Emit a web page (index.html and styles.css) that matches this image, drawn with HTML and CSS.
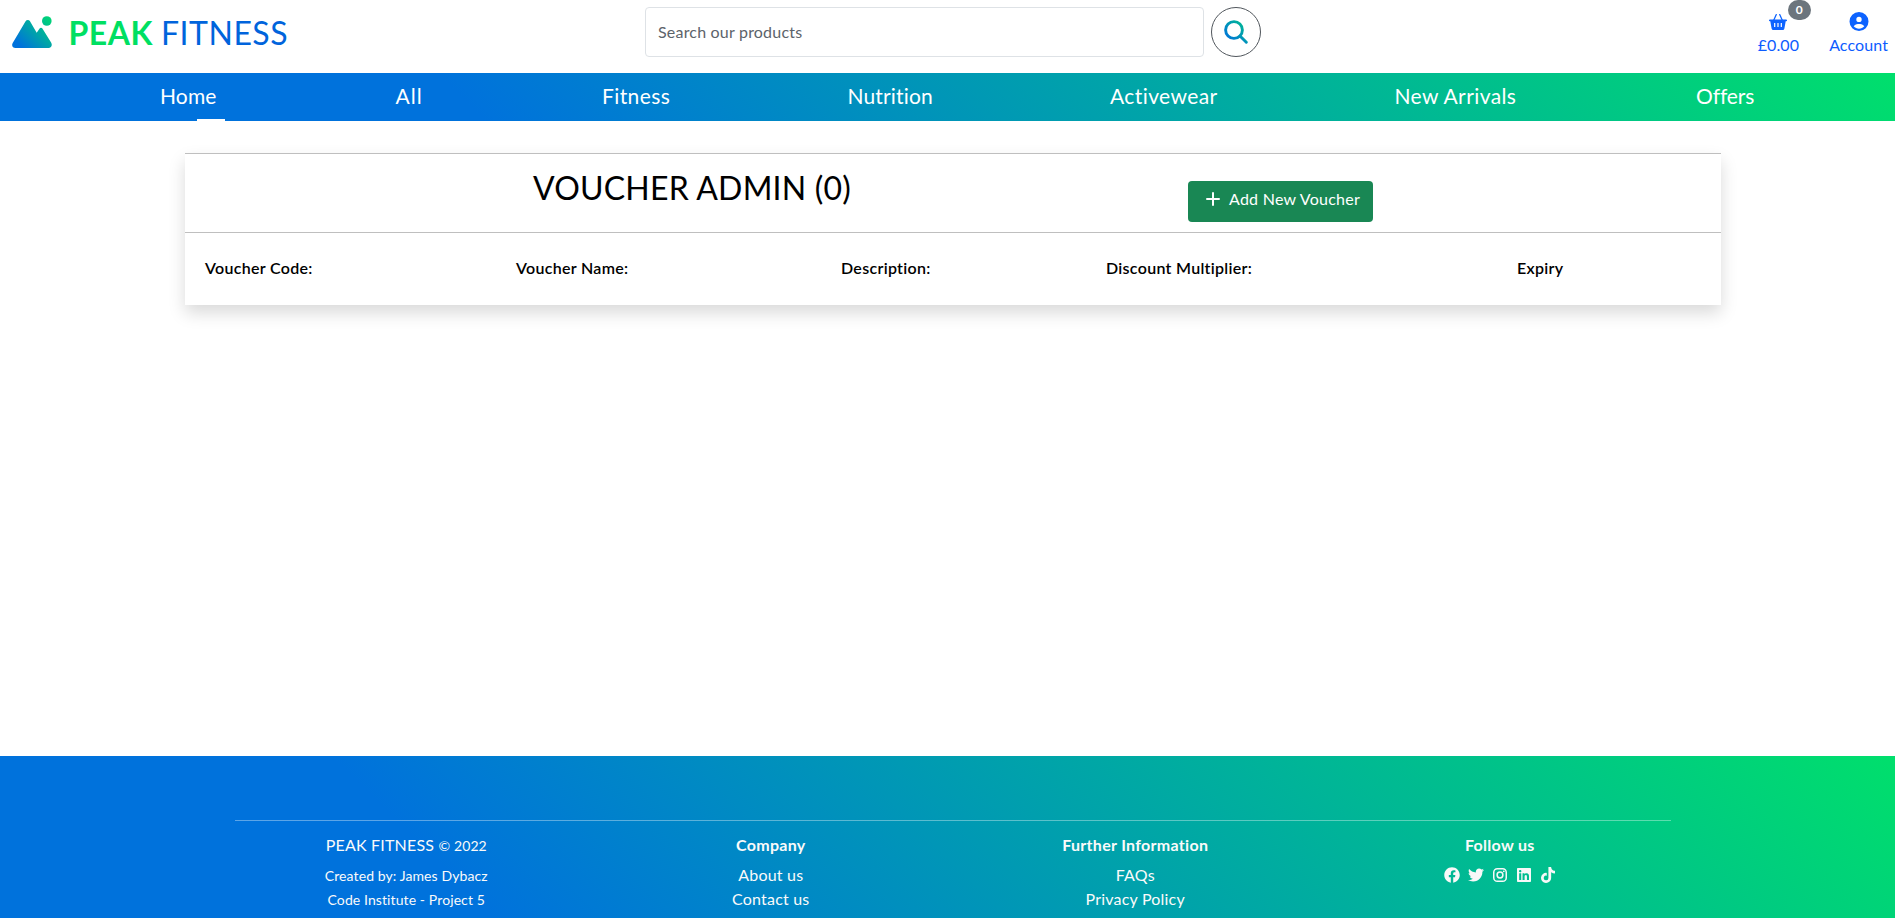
FILE: index.html
```html
<!DOCTYPE html>
<html lang="en">
<head>
<meta charset="utf-8">
<title>Peak Fitness</title>
<link rel="stylesheet" href="styles.css">
</head>
<body>
<header class="top">
  <a class="brand">
    <svg class="logo" viewBox="0 0 40 32"><defs><linearGradient id="g" gradientUnits="userSpaceOnUse" x1="6" y1="36" x2="42" y2="0"><stop offset=".12" stop-color="#0072dc"/><stop offset="1" stop-color="#00df6c"/></linearGradient></defs><path fill="url(#g)" d="M13.600 5.300a2.600 2.600 0 0 1 4.400 0l6.700 11.400 2.900-4.300a1.700 1.700 0 0 1 2.800 0L39.100 26.500c1.600 2.600.2 5.500-2.600 5.500H3.500C.7 32-.7 29.400.7 27z"/><circle cx="34.800" cy="5" r="4.800" fill="url(#g)"/></svg>
    <span class="peak">PEAK</span><span class="fit">FITNESS</span>
  </a>
  <form class="search">
    <input class="field" type="text" placeholder="Search our products">
    <button class="go" type="button"><svg viewBox="0 0 24 24"><defs><linearGradient id="s" x1="0" y1="1" x2="1" y2="0"><stop offset="0" stop-color="#0072dc"/><stop offset="1" stop-color="#00b894"/></linearGradient></defs><g fill="none" stroke="url(#s)" stroke-width="2.900" stroke-linecap="round"><circle cx="10" cy="10" r="8.400"/><path d="M16 16l6.300 6.300"/></g></svg></button>
  </form>
  <div class="links">
    <a class="bag"><svg viewBox="0 0 18 17"><path d="M4.600 7.500 7.300 1.600M13.400 7.500l-2.700-5.900" fill="none" stroke="#0d63ff" stroke-width="1.300" stroke-linecap="round"/><path fill-rule="evenodd" d="M.8 6.500h16.400a.8.8 0 0 1 0 1.700h-.5l-1.300 7.300q-.3 1.500-1.700 1.500H4.300q-1.400 0-1.700-1.500L1.300 8.200H.8a.8.800 0 0 1 0-1.700zM5.100 10v4h1.200v-4zM8.400 10v4h1.200v-4zM11.700 10v4h1.200v-4z"/></svg><span>£0.00</span><b class="count">0</b></a>
    <a class="account"><svg viewBox="0 0 512 512"><path fill-rule="evenodd" d="M399 384.200C376.900 345.800 335.400 320 288 320H224c-47.400 0-88.900 25.800-111 64.200c35.200 39.200 86.200 63.800 143 63.800s107.800-24.700 143-63.800zM0 256a256 256 0 1 1 512 0A256 256 0 1 1 0 256zm256 16a72 72 0 1 0 0-144 72 72 0 1 0 0 144z"/></svg><span>Account</span></a>
  </div>
</header>
<nav class="nav">
  <a class="current">Home</a><a class="wider">All</a><a class="wide">Fitness</a><a>Nutrition</a><a class="wide">Activewear</a><a class="wide">New Arrivals</a><a class="tight">Offers</a>
</nav>
<main class="main">
  <section class="card">
    <div class="head">
      <h1 class="title">VOUCHER ADMIN (0)</h1>
      <a class="add"><svg viewBox="0 0 14 14"><path d="M7 1v12M1 7h12" stroke="#fff" stroke-width="2" stroke-linecap="round"/></svg><span>Add New Voucher</span></a>
    </div>
    <div class="cols">
      <span>Voucher Code:</span><span>Voucher Name:</span><span>Description:</span><span>Discount Multiplier:</span><span>Expiry</span>
    </div>
  </section>
</main>
<footer class="footer">
  <hr class="rule">
  <div class="grid">
    <div class="col"><p class="first">PEAK FITNESS <small>© 2022</small></p><p class="sm">Created by: James Dybacz</p><p class="sm">Code Institute - Project 5</p></div>
    <div class="col"><h2>Company</h2><p>About us</p><p>Contact us</p></div>
    <div class="col"><h2>Further Information</h2><p>FAQs</p><p>Privacy Policy</p></div>
    <div class="col"><h2>Follow us</h2>
      <div class="social">
        <svg viewBox="0 0 512 512"><path d="M504 256C504 119 393 8 256 8S8 119 8 256c0 123.780 90.690 226.380 209.250 245V327.690h-63V256h63v-54.640c0-62.150 37-96.480 93.670-96.480 27.140 0 55.520 4.840 55.520 4.840v61h-31.280c-30.800 0-40.410 19.120-40.410 38.730V256h68.780l-11 71.690h-57.780V501C413.310 482.380 504 379.780 504 256z"/></svg>
        <svg viewBox="0 0 512 512"><path d="M459.370 151.716c.325 4.548.325 9.097.325 13.645 0 138.720-105.583 298.558-298.558 298.558-59.452 0-114.680-17.219-161.137-47.106 8.447.974 16.568 1.299 25.340 1.299 49.055 0 94.213-16.568 130.274-44.832-46.132-.975-84.792-31.188-98.112-72.772 6.498.974 12.995 1.624 19.818 1.624 9.421 0 18.843-1.300 27.614-3.573-48.081-9.747-84.143-51.980-84.143-102.985v-1.299c13.969 7.797 30.214 12.670 47.431 13.319-28.264-18.843-46.781-51.005-46.781-87.391 0-19.492 5.197-37.360 14.294-52.954 51.655 63.675 129.300 105.258 216.365 109.807-1.624-7.797-2.599-15.918-2.599-24.040 0-57.828 46.782-104.934 104.934-104.934 30.213 0 57.502 12.670 76.670 33.137 23.715-4.548 46.456-13.320 66.599-25.340-7.798 24.366-24.366 44.833-46.132 57.827 21.117-2.273 41.584-8.122 60.426-16.243-14.292 20.791-32.161 39.308-52.628 54.253z"/></svg>
        <svg viewBox="0 0 16 16"><g fill="none" stroke="#f8f8f8" stroke-width="1.500"><rect x="1.750" y="1.750" width="12.500" height="12.500" rx="3.600"/><circle cx="8" cy="8" r="2.900"/></g><circle cx="11.800" cy="4.300" r=".9"/></svg>
        <svg viewBox="0 0 448 512"><path d="M416 32H31.900C14.300 32 0 46.500 0 64.300v383.400C0 465.500 14.300 480 31.900 480H416c17.600 0 32-14.500 32-32.300V64.300c0-17.800-14.400-32.300-32-32.300zM135.400 416H69V202.200h66.500V416zm-33.200-243c-21.300 0-38.500-17.300-38.500-38.500S80.900 96 102.200 96c21.200 0 38.500 17.300 38.500 38.500 0 21.300-17.200 38.500-38.500 38.500zm282.100 243h-66.400V312c0-24.800-.5-56.700-34.500-56.700-34.600 0-39.900 27-39.900 54.900V416h-66.400V202.200h63.700v29.200h.9c8.900-16.800 30.600-34.500 62.900-34.500 67.200 0 79.700 44.300 79.700 101.900V416z"/></svg>
        <svg viewBox="0 0 448 512"><path d="M448,209.910a210.060,210.060,0,0,1-122.770-39.250V349.380A162.550,162.550,0,1,1,185,188.310V278.200a74.620,74.620,0,1,0,52.230,71.180V0l88,0a121.180,121.180,0,0,0,1.860,22.170h0A122.180,122.180,0,0,0,381,102.390a121.430,121.430,0,0,0,67,20.140Z"/></svg>
      </div>
    </div>
  </div>
</footer>
</body>
</html>
```

FILE: styles.css
```css
* { box-sizing: border-box; }
body { margin: 0; height: 918px; overflow: hidden; display: flex; flex-direction: column; background: #fff; color: #000; font: 16px/24px Lato, "Open Sans", sans-serif; font-variant-ligatures: none; letter-spacing: .2px; }
h1, h2, p { margin: 0; font-size: 16px; font-weight: 400; }
.top { height: 73px; flex: none; display: grid; grid-template-columns: 645px 616px 1fr; }
.brand { display: flex; align-items: flex-start; padding: 16px 0 0 11.5px; font-size: 32px; line-height: 34px; }
.logo { width: 40px; height: 32px; margin-right: 17px; }
.peak { width: 92.5px; color: #00df62; font-weight: 700; letter-spacing: .5px; }
.fit { color: #0064dc; letter-spacing: .5px; }
.search { display: flex; gap: 7px; padding-top: 7px; margin: 0; }
.field { width: 559px; height: 50px; padding: 0 12px 2px; border: 1px solid #dee2e6; border-radius: 4px; font: inherit; letter-spacing: .2px; }
.field::placeholder { color: #5c636a; opacity: 1; }
.go { width: 50px; height: 50px; padding: 0; border: 1px solid #50565c; border-radius: 50%; background: #fff; display: flex; align-items: center; justify-content: center; }
.go svg { width: 24px; height: 24px; }
.links { display: flex; justify-content: flex-end; gap: 30px; padding: 12px 7px 0 0; color: #0d5cff; letter-spacing: .1px; }
.links a { display: flex; flex-direction: column; align-items: center; position: relative; }
.links svg { height: 19px; fill: #0d63ff; margin-bottom: 2px; }
.bag svg { width: 18px; }
.account svg { width: 20px; }
.count { position: absolute; left: 30px; top: -12px; width: 23px; height: 20px; border-radius: 10px; background: #6c757d; color: #fff; font-size: 12px; line-height: 20px; text-align: center; }
.nav { height: 48px; flex: none; display: grid; grid-template-columns: 235.5px 206.5px 245.5px 262.5px 284.5px 301.5px auto; padding-left: 160px; background: linear-gradient(45deg, #0072dc 25%, #00df6c); color: #fff; font-size: 21px; line-height: 45px; letter-spacing: .15px; }
.nav a { position: relative; }
.nav .wide { letter-spacing: .4px; }
.nav .wider { letter-spacing: 1px; }
.nav .tight { letter-spacing: -.1px; }
.current::after { content: ""; position: absolute; left: 37px; bottom: 0; width: 28px; height: 2px; background: #fff; }
.main { flex: 1; padding: 32px 174px 0 185px; }
.card { height: 152px; box-shadow: 0 8px 16px rgba(0,0,0,.15); }
.head { height: 80px; display: flex; border: solid #bfbfbf; border-width: 1px 0; }
.title { width: 655px; margin-left: 348px; padding-top: 14px; font-size: 32px; line-height: 40px; }
.add { display: flex; align-items: center; width: 185px; height: 41px; margin-top: 27px; padding: 0 0 5px 18px; gap: 9px; border-radius: 4px; background: #198754; color: #fff; letter-spacing: .25px; }
.add svg { width: 14px; height: 14px; }
.cols { display: grid; grid-template-columns: 311px 325px 265px 411px 1fr; padding: 23px 0 0 20px; font-weight: 600; letter-spacing: .3px; }
.footer { height: 162px; flex: none; padding: 64px 213px 0 224px; background: linear-gradient(45deg, #0072dc 25%, #00df6c) 0 0 / 100% 190px; color: #fafafa; }
.rule { width: 1436px; height: 1px; margin: 0 0 0 11px; border: 0; background: rgba(255,255,255,.36); }
.grid { display: grid; grid-template-columns: repeat(4, 1fr); padding-top: 12px; text-align: center; }
.col h2, .first { font-weight: 700; margin-bottom: 6px; letter-spacing: .3px; }
.first { font-weight: 400; letter-spacing: .2px; }
small, .sm { font-size: 14px; letter-spacing: .1px; }
.social { display: flex; justify-content: center; gap: 8px; padding-top: 4px; }
.social svg { width: 16px; height: 16px; fill: #f8f8f8; }
```
